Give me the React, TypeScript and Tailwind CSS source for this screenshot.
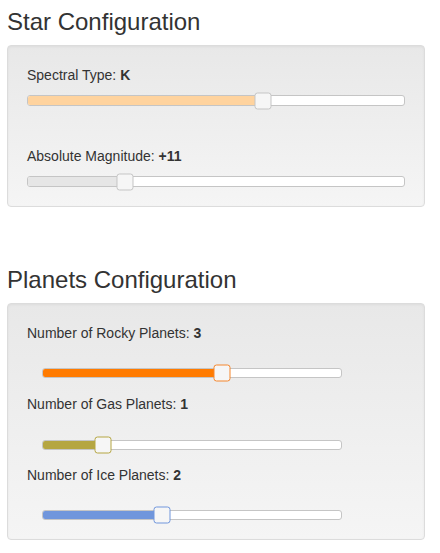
const font = { fontFamily: '"Liberation Sans", Arial, sans-serif' }

type SliderProps = {
  pct: number
  fillClass: string
  handleClass: string
  heightClass: string
}

function Slider({ pct, fillClass, handleClass, heightClass }: SliderProps) {
  return (
    <div className={`relative ${heightClass} rounded-[3px] border border-[#c5c5c5] bg-white`}>
      <div
        className={`absolute left-0 top-0 h-full rounded-l-[2px] ${fillClass}`}
        style={{ width: `${pct}%` }}
      />
      <div
        className={`absolute top-1/2 h-[17px] w-[17px] -translate-x-1/2 -translate-y-1/2 rounded-[3px] border bg-[#f6f6f6] ${handleClass}`}
        style={{ left: `${pct}%` }}
      />
    </div>
  )
}

function Well({ children }: { children: React.ReactNode }) {
  return (
    <div className="mx-[7px] w-[418px] rounded-[4px] border border-[#dcdcdc] bg-gradient-to-b from-[#e8e8e8] to-[#f5f5f5] p-[19px] shadow-[inset_0_1px_3px_rgba(0,0,0,0.05)]">
      {children}
    </div>
  )
}

export default function App() {
  return (
    <div className="h-[553px] w-[440px] bg-white text-[14px] leading-[20px] text-[#333]" style={font}>
      <h3 className="mx-[7px] mb-[10px] pt-[8px] text-[24px] font-normal leading-[27px]">Star Configuration</h3>
      <Well>
        <div>
          Spectral Type: <b>K</b>
        </div>
        <div className="mt-[10px]">
          <Slider pct={62.5} heightClass="h-[11px]" fillClass="bg-[#ffd39e]" handleClass="border-[#c5c5c5]" />
        </div>
        <div className="mt-[40px]">
          Absolute Magnitude: <b>+11</b>
        </div>
        <div className="mt-[10px]">
          <Slider pct={25.9} heightClass="h-[11px]" fillClass="bg-[#e6e6e6]" handleClass="border-[#c5c5c5]" />
        </div>
      </Well>

      <h3 className="mx-[7px] mb-[10px] mt-[59px] text-[24px] font-normal leading-[27px]">Planets Configuration</h3>
      <Well>
        <div>
          Number of Rocky Planets: <b>3</b>
        </div>
        <div className="ml-[15px] mt-[25px] w-[300px]">
          <Slider pct={60} heightClass="h-[10px]" fillClass="bg-[#ff7b00]" handleClass="border-[#f5862c]" />
        </div>
        <div className="mt-[16px]">
          Number of Gas Planets: <b>1</b>
        </div>
        <div className="ml-[15px] mt-[26px] w-[300px]">
          <Slider pct={20} heightClass="h-[10px]" fillClass="bg-[#b5a642]" handleClass="border-[#b5a642]" />
        </div>
        <div className="mt-[15px]">
          Number of Ice Planets: <b>2</b>
        </div>
        <div className="ml-[15px] mt-[25px] w-[300px]">
          <Slider pct={40} heightClass="h-[10px]" fillClass="bg-[#7096dc]" handleClass="border-[#7096dc]" />
        </div>
      </Well>
    </div>
  )
}
